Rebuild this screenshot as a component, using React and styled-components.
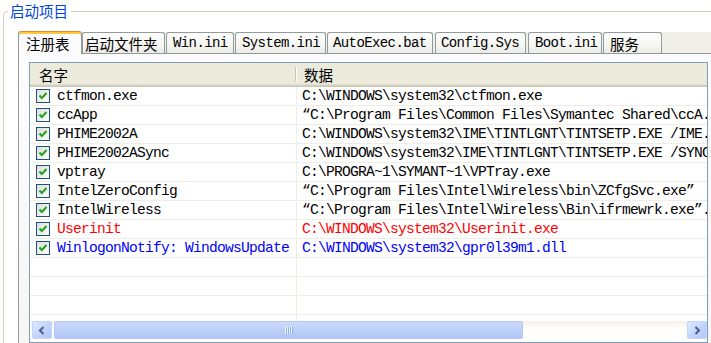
import React from 'react';
import styled, { createGlobalStyle } from 'styled-components';

const GlobalStyle = createGlobalStyle`
  body {
    margin: 0;
    background: #fff;
  }
`;

const Screen = styled.div`
  width: 711px;
  height: 343px;
  overflow: hidden;
  background: #fff;
  font-family: "Liberation Mono", "Noto Sans CJK SC", monospace;
`;

const Group = styled.fieldset`
  box-sizing: border-box;
  width: 780px;
  height: 420px;
  margin: 0 0 0 3px;
  padding: 9px 0 0 14px;
  border: 1px solid #d0d0bf;
  border-radius: 4px 0 0 0;
  min-width: 0;
`;

const Legend = styled.legend`
  margin-left: -10px;
  padding: 0 3px 0 2px;
  font-family: "Noto Sans CJK SC", sans-serif;
  font-size: 14.5px;
  line-height: 22px;
  color: #0046d5;
`;

const TabStrip = styled.div`
  display: flex;
  align-items: flex-end;
  height: 22px;
  position: relative;
  z-index: 1;
  background: linear-gradient(transparent 1px, #efeee7 1px);
`;

const Tab = styled.div`
  box-sizing: border-box;
  flex: 0 0 ${p => p.$w}px;
  margin-right: ${p => p.$gap}px;
  height: ${p => (p.$active ? 23 : 21)}px;
  margin-bottom: ${p => (p.$active ? -1 : 0)}px;
  padding-left: ${p => p.$pad}px;
  border: 1px solid #919b9c;
  border-bottom: none;
  border-radius: 3px 3px 0 0;
  background: ${p => (p.$active ? '#fcfcfe' : 'linear-gradient(#ffffff, #f3f3ef 70%, #ecebe5)')};
  box-shadow: ${p => (p.$active ? 'inset 0 2px 0 #ffc83c' : 'none')};
  border-top-color: ${p => (p.$active ? '#e68b2c' : '#919b9c')};
  display: flex;
  align-items: center;
  white-space: nowrap;
  color: #000;
  font-family: ${p => (p.$cjk ? '"Noto Sans CJK SC", sans-serif' : '"Liberation Mono", monospace')};
  font-size: ${p => (p.$cjk ? '14.5px' : '14px')};
  letter-spacing: ${p => (p.$cjk ? '0' : '-0.6px')};
  padding-top: ${p => (p.$active ? 1 : 0)}px;
`;

const Panel = styled.div`
  border-top: 1px solid #919b9c;
  border-left: 1px solid #919b9c;
  background: linear-gradient(#fcfcfe, #f6f5f0);
  padding: 8px 0 0 10px;
  height: 330px;
`;

const List = styled.div`
  box-sizing: border-box;
  width: 679px;
  height: 281px;
  border: 1px solid #7f9db9;
  background: #fff;
  display: flex;
  flex-direction: column;
`;

const Header = styled.div`
  flex: 0 0 24px;
  display: flex;
  background: #ebeadb;
  box-shadow: inset 0 -1px 0 #cbc7b8, inset 0 -2px 0 #d6d2c2, inset 0 -3px 0 #e2decd;
`;

const HeaderCell = styled.div`
  box-sizing: border-box;
  position: relative;
  flex: ${p => (p.$w ? `0 0 ${p.$w}px` : '1')};
  padding-left: ${p => p.$pad}px;
  padding-bottom: 2px;
  display: flex;
  align-items: center;
  font-family: "Noto Sans CJK SC", sans-serif;
  font-size: 14.5px;
  color: #000;

  &::after {
    content: '';
    display: ${p => (p.$w ? 'block' : 'none')};
    position: absolute;
    right: 1px;
    top: 4px;
    bottom: 6px;
    width: 1px;
    background: #c7c5b2;
    box-shadow: 1px 0 0 #fff;
  }
`;

const Rows = styled.div`
  flex: 1;
  overflow: hidden;
`;

const Row = styled.div`
  display: grid;
  grid-template-columns: 267px 1fr;
  height: 19px;
  box-sizing: border-box;
  border-bottom: 1px solid #efeee4;
  font-size: 14.6px;
  letter-spacing: -0.76px;
  color: ${p => p.$tone || '#000'};
  white-space: nowrap;
`;

const NameCell = styled.div`
  display: flex;
  align-items: center;
  gap: 7px;
  padding-left: 6px;
  border-right: 1px solid #efeee4;
  overflow: hidden;
`;

const DataCell = styled.div`
  display: flex;
  align-items: center;
  padding-left: 5px;
  overflow: hidden;
`;

const Scrollbar = styled.div`
  flex: 0 0 18px;
  margin-bottom: 3px;
  display: flex;
  align-items: stretch;
  background: linear-gradient(#f3f1ea, #fefefb 40%, #fdfdfa);
`;

const ScrollButton = styled.div`
  box-sizing: border-box;
  flex: 0 0 20px;
  margin: 0 ${p => p.$mr}px 0 ${p => p.$ml}px;
  border: 1px solid #c3d3fd;
  border-radius: 2px;
  background: linear-gradient(135deg, #e1eafe, #c1d3fb 55%, #b4c8f6);
  display: flex;
  align-items: center;
  justify-content: center;
`;

const Thumb = styled.div`
  box-sizing: border-box;
  flex: 0 0 469px;
  margin-left: 2px;
  border: 1px solid #b4c7f4;
  border-radius: 2px;
  background: linear-gradient(#cbdafc, #bccff8 50%, #b2c7f5);
  display: flex;
  align-items: center;
  justify-content: center;
`;

const Spacer = styled.div`
  flex: 1;
`;

const Check = () => (
  <svg width="14" height="14" viewBox="0 0 14 14" style={{ flex: '0 0 14px' }}>
    <defs>
      <linearGradient id="cb" x1="0" y1="0" x2="1" y2="1">
        <stop offset="0" stopColor="#dcdcd7" />
        <stop offset="1" stopColor="#ffffff" />
      </linearGradient>
    </defs>
    <rect x="0.5" y="0.5" width="13" height="13" fill="url(#cb)" stroke="#1c5180" />
    <path d="M3.5 6.5 L5.8 9 L10.5 4" fill="none" stroke="#21a121" strokeWidth="2" />
  </svg>
);

const Arrow = ({ dir }) => (
  <svg width="8" height="9" viewBox="0 0 8 9">
    <path
      d={dir === 'left' ? 'M5.5 1 L2 4.5 L5.5 8' : 'M2.5 1 L6 4.5 L2.5 8'}
      fill="none"
      stroke="#4d6185"
      strokeWidth="2"
    />
  </svg>
);

const Grip = () => (
  <svg width="8" height="8" viewBox="0 0 8 8">
    {[0, 2, 4, 6].map(x => (
      <rect key={x} x={x} y="0" width="1" height="8" fill="#eef4fe" />
    ))}
    {[1, 3, 5, 7].map(x => (
      <rect key={x} x={x} y="1" width="1" height="7" fill="#8cb0f8" />
    ))}
  </svg>
);

const tabs = [
  { label: '注册表', w: 64, pad: 7, cjk: true, active: true, gap: 0 },
  { label: '启动文件夹', w: 83, pad: 2, cjk: true, gap: 1 },
  { label: 'Win.ini', w: 68, pad: 6, gap: 1 },
  { label: 'System.ini', w: 91, pad: 6, gap: 1 },
  { label: 'AutoExec.bat', w: 106, pad: 5, gap: 2 },
  { label: 'Config.Sys', w: 91, pad: 5, gap: 2 },
  { label: 'Boot.ini', w: 74, pad: 6, gap: 1 },
  { label: '服务', w: 59, pad: 6, cjk: true, gap: 0 },
];

const entries = [
  { name: 'ctfmon.exe', data: 'C:\\WINDOWS\\system32\\ctfmon.exe' },
  { name: 'ccApp', data: '\u201cC:\\Program Files\\Common Files\\Symantec Shared\\ccA...' },
  { name: 'PHIME2002A', data: 'C:\\WINDOWS\\system32\\IME\\TINTLGNT\\TINTSETP.EXE /IME...' },
  { name: 'PHIME2002ASync', data: 'C:\\WINDOWS\\system32\\IME\\TINTLGNT\\TINTSETP.EXE /SYNC...' },
  { name: 'vptray', data: 'C:\\PROGRA~1\\SYMANT~1\\VPTray.exe' },
  { name: 'IntelZeroConfig', data: '\u201cC:\\Program Files\\Intel\\Wireless\\bin\\ZCfgSvc.exe\u201d' },
  { name: 'IntelWireless', data: '\u201cC:\\Program Files\\Intel\\Wireless\\Bin\\ifrmewrk.exe\u201d...' },
  { name: 'Userinit', data: 'C:\\WINDOWS\\system32\\Userinit.exe', tone: '#ff0000' },
  { name: 'WinlogonNotify: WindowsUpdate', data: 'C:\\WINDOWS\\system32\\gpr0l39m1.dll', tone: '#0000ff' },
];

export default function App() {
  return (
    <Screen>
      <GlobalStyle />
      <Group>
        <Legend>启动项目</Legend>
        <TabStrip>
          {tabs.map(t => (
            <Tab key={t.label} $w={t.w} $pad={t.pad} $cjk={t.cjk} $active={t.active} $gap={t.gap}>
              {t.label}
            </Tab>
          ))}
        </TabStrip>
        <Panel>
          <List>
            <Header>
              <HeaderCell $w={267} $pad={9}>名字</HeaderCell>
              <HeaderCell $pad={7}>数据</HeaderCell>
            </Header>
            <Rows>
              {entries.map(e => (
                <Row key={e.name} $tone={e.tone}>
                  <NameCell>
                    <Check />
                    {e.name}
                  </NameCell>
                  <DataCell>{e.data}</DataCell>
                </Row>
              ))}
              {[0, 1, 2, 3].map(i => (
                <Row key={'empty' + i}>
                  <NameCell />
                  <DataCell />
                </Row>
              ))}
            </Rows>
            <Scrollbar>
              <ScrollButton $ml={2} $mr={0}>
                <Arrow dir="left" />
              </ScrollButton>
              <Thumb>
                <Grip />
              </Thumb>
              <Spacer />
              <ScrollButton $ml={0} $mr={0}>
                <Arrow dir="right" />
              </ScrollButton>
            </Scrollbar>
          </List>
        </Panel>
      </Group>
    </Screen>
  );
}
